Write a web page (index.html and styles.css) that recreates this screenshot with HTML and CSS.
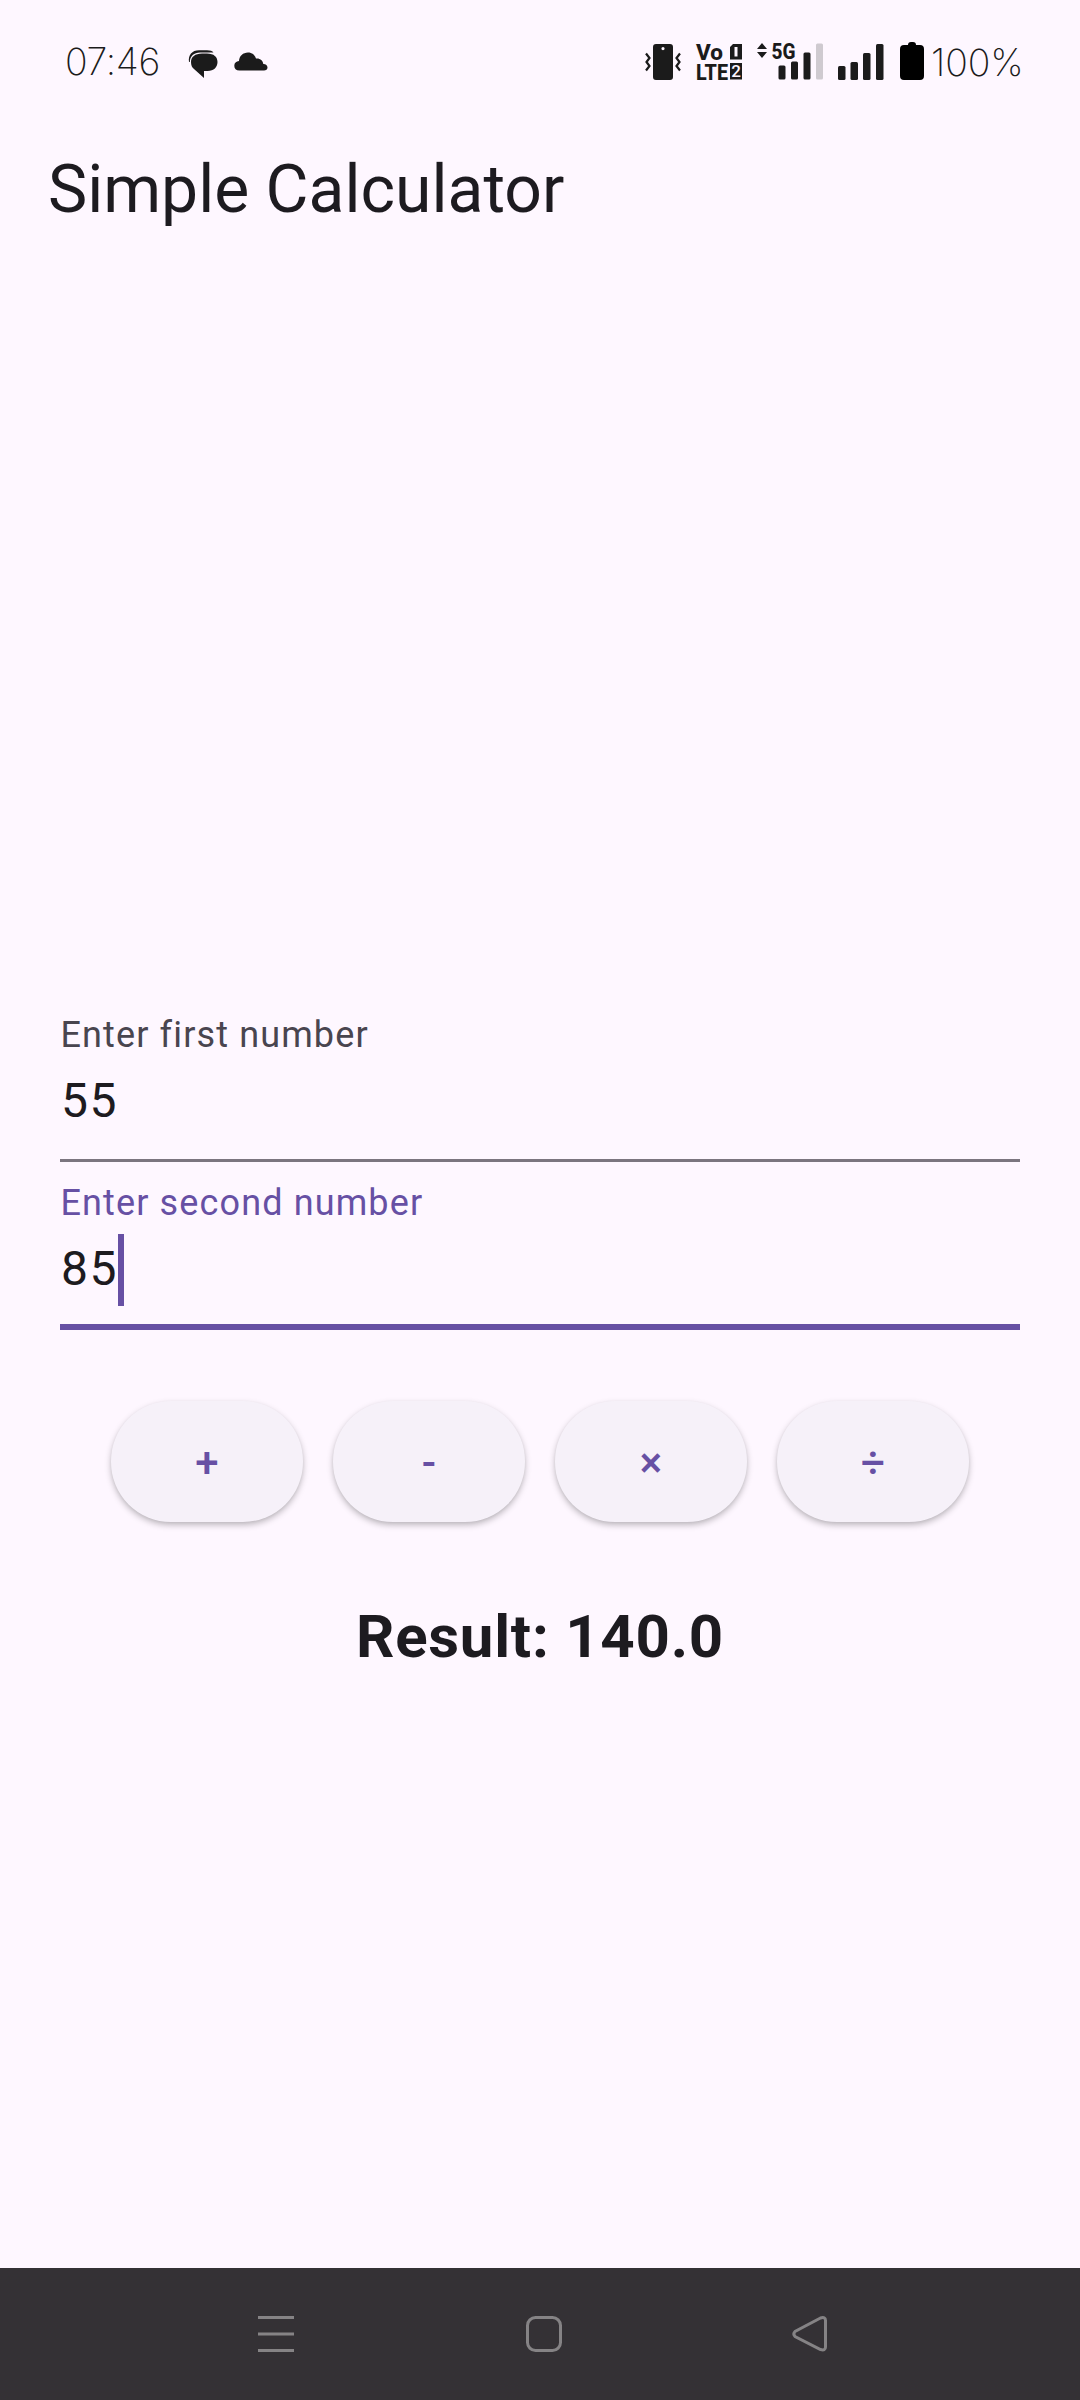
FILE: index.html
```html
<!DOCTYPE html>
<html lang="en">
<head>
<meta charset="utf-8">
<title>Simple Calculator</title>
<link rel="stylesheet" href="styles.css">
</head>
<body>
<div class="status">
  <span class="clock">07:46</span>
  <svg class="chat" width="30" height="30" viewBox="0 0 30 30"><path d="M13 3.500H18C25 3.500 28.500 7 28.500 12S25 21 18.500 21H15V28L5 19C3 17.500 2 15.500 2 12C2 7 6 3.500 13 3.500Z"/><path d="M0 12C-1 5 3 .2 10 .2H18C21 .2 23.500 1 24.500 2.400H11C5 2.400 1 6 .8 12Z"/></svg>
  <svg class="cloud" width="34" height="19" viewBox="0 0 34 19"><path d="M5.500 18.500C2 18.500.3 16.500.3 13.700C.3 11 2.200 9.300 5 9C5.300 4 9 .5 14 .5C18 .5 20.700 2.700 22 6.500C26 6 29 8.500 29.300 12C32 12.200 33.500 13.500 33.500 15.500C33.500 17.500 32 18.500 30 18.500Z"/></svg>
  <span class="spacer"></span>
  <svg class="vibrate" width="36" height="36" viewBox="0 0 36 36"><path fill-rule="evenodd" d="M11 0H25Q28 0 28 3V33Q28 36 25 36H11Q8 36 8 33V3Q8 0 11 0ZM18 3A1.600 1.600 0 1 0 18 6.200A1.600 1.600 0 1 0 18 3Z"/><path d="M1 9.500L4.500 14L1.500 18L4.500 22L1 26.500M35 9.500L31.500 14L34.500 18L31.500 22L35 26.500" fill="none" stroke="#1b1b1b" stroke-width="2.200"/></svg>
  <svg class="volte" width="47" height="38" viewBox="0 0 47 38"><g class="badge"><text x="0" y="17.500" font-size="22.500" textLength="27" lengthAdjust="spacingAndGlyphs">Vo</text><text x="0" y="37.500" font-size="22.500" textLength="32" lengthAdjust="spacingAndGlyphs">LTE</text></g><path fill-rule="evenodd" d="M37 2H46V17.500H34V5ZM38.500 5V14.500H41.500V5Z"/><path d="M34 21H46V37.500H34Z"/><text class="sim" x="40" y="35" text-anchor="middle" font-size="17">2</text></svg>
  <svg class="signal5g" width="67" height="38" viewBox="0 0 67 38"><path d="M5 1L10 7H0ZM0 10H10L5 16Z"/><text class="badge" x="14.500" y="16.500" font-size="22" textLength="24" lengthAdjust="spacingAndGlyphs">5G</text><rect x="21.500" y="23.500" width="7" height="14" rx="1.500"/><rect x="34" y="19.500" width="7" height="18" rx="1.500"/><rect x="46.500" y="10.500" width="7" height="27" rx="1.500"/><rect x="59" y="1.500" width="7" height="36" rx="1.500" fill="#cfcad0"/></svg>
  <svg class="signal" width="46" height="36" viewBox="0 0 46 36"><rect x="0" y="22" width="7.500" height="14" rx="1.500"/><rect x="12.500" y="18" width="7.500" height="18" rx="1.500"/><rect x="25" y="9" width="7.500" height="27" rx="1.500"/><rect x="38" y="0" width="7.500" height="36" rx="1.500"/></svg>
  <svg class="battery" width="24" height="38" viewBox="0 0 24 38"><path d="M8 3Q8 0 11 0H13Q16 0 16 3H20Q24 3 24 7V34Q24 38 20 38H4Q0 38 0 34V7Q0 3 4 3Z" fill="#000"/></svg>
  <span class="percent">100%</span>
</div>
<header class="appbar"><h1>Simple Calculator</h1></header>
<main class="main">
  <div class="field"><label class="label">Enter first number</label><div class="value">55</div></div>
  <div class="field focused"><label class="label">Enter second number</label><div class="value">85<span class="caret"></span></div></div>
  <div class="buttons">
    <button class="op">+</button><button class="op">-</button><button class="op">×</button><button class="op">÷</button>
  </div>
  <div class="result">Result: 140.0</div>
</main>
<nav class="nav">
  <svg class="menu" width="36" height="36" viewBox="0 0 36 36"><path d="M0 1.500H36M0 18H36M0 34.500H36"/></svg>
  <svg class="home" width="36" height="36" viewBox="0 0 36 36"><rect x="1.500" y="1.500" width="33" height="33" rx="8"/></svg>
  <svg class="back" width="36" height="36" viewBox="0 0 36 36"><path d="M28.500 2L3 15.500Q.5 18 3 20.500L28.500 33.500Q33.500 35 33.500 31V4.500Q33.500 .5 28.500 2Z"/></svg>
</nav>
</body>
</html>
```
FILE: styles.css
```css
* { box-sizing: border-box; }
body {
  margin: 0;
  width: 1080px;
  height: 2400px;
  display: flex;
  flex-direction: column;
  background: #fef7ff;
  color: #1d1b20;
  font-family: Roboto, sans-serif;
}
svg { display: block; flex: none; overflow: visible; }
.status {
  height: 106px;
  padding: 42px 57px 0 65px;
  display: flex;
  align-items: flex-start;
  fill: #1b1b1b;
  color: #1b1b1b;
}
.clock, .percent {
  flex: none;
  font-family: Inter, sans-serif;
  font-weight: 250;
  font-size: 37.5px;
  line-height: 40px;
  white-space: nowrap;
}
.clock { width: 96px; letter-spacing: -.3px; }
.percent { width: 92px; padding-top: 1px; letter-spacing: -.1px; }
.chat { margin: 8px 0 0 28px; }
.cloud { margin: 10px 0 0 15px; }
.spacer { flex: 1; }
.vibrate { margin: 2px 15px 0 0; }
.volte { margin-right: 14px; }
.signal5g { margin-right: 14px; }
.signal { margin: 2px 16px 0 0; }
.battery { margin-right: 7px; }
.badge { font-family: Roboto, sans-serif; font-weight: 800; }
.sim { font-family: Roboto, sans-serif; font-weight: 500; fill: #fef7ff; }
.appbar { height: 168px; padding-left: 48px; display: flex; align-items: center; }
.appbar h1 { margin: 0; font-weight: 400; font-size: 66px; line-height: 84px; }
.main { flex: 1; padding: 720px 60px 0; display: flex; flex-direction: column; }
.field {
  height: 168px;
  flex: none;
  padding-top: 20px;
  display: flex;
  flex-direction: column;
  gap: 10px;
  border-bottom: 3px solid #7b757f;
}
.label { padding-left: .5px; font-size: 36px; line-height: 42px; letter-spacing: 1.13px; color: #49454f; }
.value { display: flex; align-items: flex-start; padding-left: 1px; font-size: 48px; line-height: 70px; letter-spacing: 1.5px; height: 72px; }
.focused { border-bottom: 6px solid #6750a4; }
.focused .label { color: #6750a4; }
.caret { width: 6px; height: 72px; background: #6750a4; }
.buttons { margin-top: 71px; display: flex; justify-content: center; gap: 30px; }
.op {
  width: 192px;
  height: 121px;
  padding: 2px 0 0;
  border: 0;
  border-radius: 60px;
  background: #f6f1f9;
  box-shadow: 0 3px 6px rgba(0, 0, 0, .25), 0 1px 3px rgba(0, 0, 0, .04);
  color: #6750a4;
  font: 500 42px/60px Roboto, sans-serif;
}
.result { margin-top: 80px; text-align: center; font-weight: 700; font-size: 60px; line-height: 70px; letter-spacing: .75px; }
.nav {
  height: 132px;
  flex: none;
  padding-left: 258px;
  display: flex;
  align-items: center;
  background: #343135;
  fill: none;
  stroke: #858385;
  stroke-width: 3;
}
.home { margin-left: 232px; }
.back { margin-left: 230px; }
```
